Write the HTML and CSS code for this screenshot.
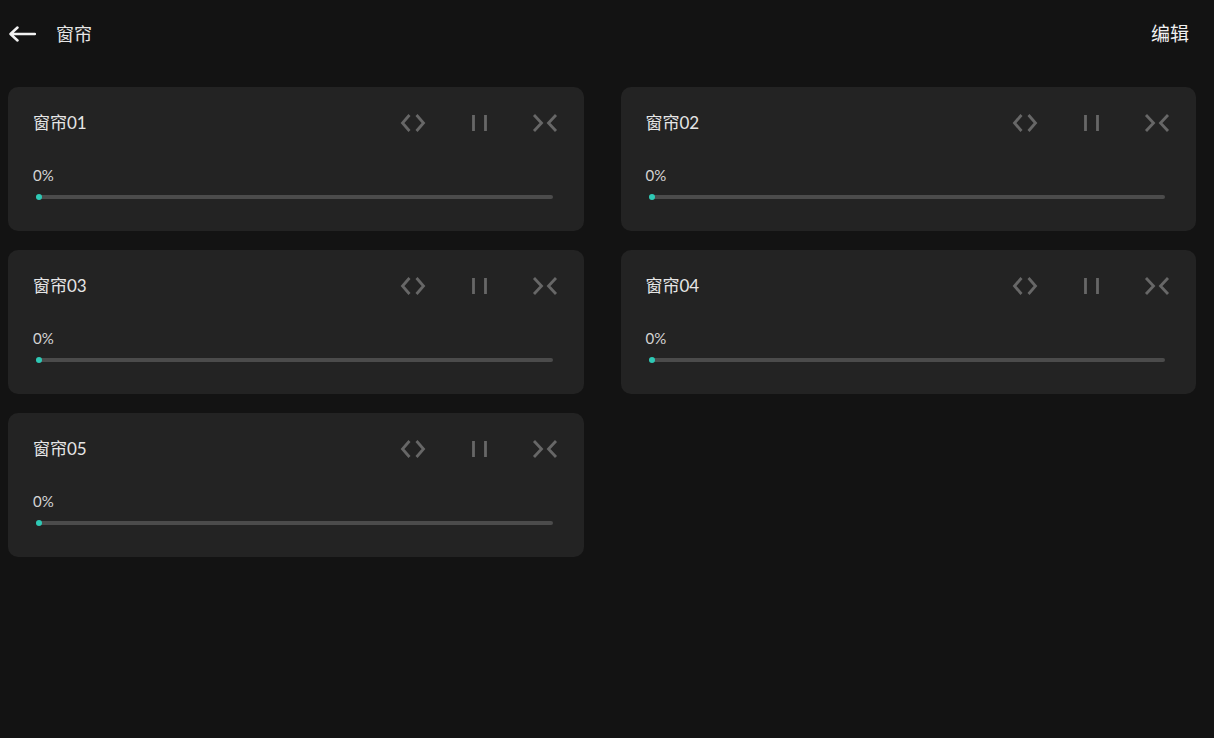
FILE: index.html
```html
<!DOCTYPE html>
<html lang="zh-CN">
<head>
    <meta charset="UTF-8">
    <title>窗帘</title>
    <link rel="stylesheet" href="styles.css">
</head>
<body>
    <div class="top-bar">
        <div class="top-left">
            <svg class="back" width="28" height="18" viewBox="0 0 28 18">
                <path d="M27 9H3M9.5 2.5L2.5 9L9.5 15.5" fill="none" stroke="#f2f2f2" stroke-width="2.5" stroke-linecap="round" stroke-linejoin="round"/>
            </svg>
            <span class="page-title">窗帘</span>
        </div>
        <span class="edit">编辑</span>
    </div>

    <div class="grid">
        <div class="card">
            <div class="card-head">
                <span class="name">窗帘01</span>
                <div class="ctrls">
                    <svg width="26" height="18" viewBox="0 0 26 18"><path d="M9.5 1L2.5 9L9.5 17M16.5 1L23.5 9L16.5 17" class="ic"/></svg>
                    <svg width="26" height="18" viewBox="0 0 26 18"><path d="M7.5 1V17M19.5 1V17" class="ic"/></svg>
                    <svg width="26" height="18" viewBox="0 0 26 18"><path d="M2 1L9.5 9L2 17M24 1L16.5 9L24 17" class="ic"/></svg>
                </div>
            </div>
            <div class="pct">0%</div>
            <div class="track"><i class="dot"></i></div>
        </div>
        <div class="card">
            <div class="card-head">
                <span class="name">窗帘02</span>
                <div class="ctrls">
                    <svg width="26" height="18" viewBox="0 0 26 18"><path d="M9.5 1L2.5 9L9.5 17M16.5 1L23.5 9L16.5 17" class="ic"/></svg>
                    <svg width="26" height="18" viewBox="0 0 26 18"><path d="M7.5 1V17M19.5 1V17" class="ic"/></svg>
                    <svg width="26" height="18" viewBox="0 0 26 18"><path d="M2 1L9.5 9L2 17M24 1L16.5 9L24 17" class="ic"/></svg>
                </div>
            </div>
            <div class="pct">0%</div>
            <div class="track"><i class="dot"></i></div>
        </div>
        <div class="card">
            <div class="card-head">
                <span class="name">窗帘03</span>
                <div class="ctrls">
                    <svg width="26" height="18" viewBox="0 0 26 18"><path d="M9.5 1L2.5 9L9.5 17M16.5 1L23.5 9L16.5 17" class="ic"/></svg>
                    <svg width="26" height="18" viewBox="0 0 26 18"><path d="M7.5 1V17M19.5 1V17" class="ic"/></svg>
                    <svg width="26" height="18" viewBox="0 0 26 18"><path d="M2 1L9.5 9L2 17M24 1L16.5 9L24 17" class="ic"/></svg>
                </div>
            </div>
            <div class="pct">0%</div>
            <div class="track"><i class="dot"></i></div>
        </div>
        <div class="card">
            <div class="card-head">
                <span class="name">窗帘04</span>
                <div class="ctrls">
                    <svg width="26" height="18" viewBox="0 0 26 18"><path d="M9.5 1L2.5 9L9.5 17M16.5 1L23.5 9L16.5 17" class="ic"/></svg>
                    <svg width="26" height="18" viewBox="0 0 26 18"><path d="M7.5 1V17M19.5 1V17" class="ic"/></svg>
                    <svg width="26" height="18" viewBox="0 0 26 18"><path d="M2 1L9.5 9L2 17M24 1L16.5 9L24 17" class="ic"/></svg>
                </div>
            </div>
            <div class="pct">0%</div>
            <div class="track"><i class="dot"></i></div>
        </div>
        <div class="card">
            <div class="card-head">
                <span class="name">窗帘05</span>
                <div class="ctrls">
                    <svg width="26" height="18" viewBox="0 0 26 18"><path d="M9.5 1L2.5 9L9.5 17M16.5 1L23.5 9L16.5 17" class="ic"/></svg>
                    <svg width="26" height="18" viewBox="0 0 26 18"><path d="M7.5 1V17M19.5 1V17" class="ic"/></svg>
                    <svg width="26" height="18" viewBox="0 0 26 18"><path d="M2 1L9.5 9L2 17M24 1L16.5 9L24 17" class="ic"/></svg>
                </div>
            </div>
            <div class="pct">0%</div>
            <div class="track"><i class="dot"></i></div>
        </div>
    </div>
</body>
</html>
```

FILE: styles.css
```css
*{
    margin: 0;
    padding: 0;
    box-sizing: border-box;
}
body{
    background-color: #131313;
    color: #e6e6e6;
    font-family: "Lato", "Noto Sans CJK SC", sans-serif;
    width: 1214px;
    height: 738px;
    overflow: hidden;
}
.top-bar{
    height: 67px;
    display: flex;
    align-items: center;
    justify-content: space-between;
    padding: 0 25px 0 8px;
}
.top-left{
    display: flex;
    align-items: center;
}
.back{
    display: block;
}
.page-title{
    margin-left: 20px;
    font-size: 18px;
    line-height: 24px;
}
.edit{
    font-size: 19px;
    line-height: 24px;
    color: #f0f0f0;
}
.grid{
    margin-top: 20px;
    padding: 0 18px 0 8px;
    display: grid;
    grid-template-columns: 1fr 1fr;
    column-gap: 37px;
    row-gap: 19px;
}
.card{
    height: 144px;
    background-color: #232323;
    border-radius: 10px;
    padding: 24px 26px 0 25px;
}
.card-head{
    display: flex;
    align-items: center;
    justify-content: space-between;
    height: 24px;
}
.name{
    font-size: 17px;
    line-height: 24px;
}
.ctrls{
    display: flex;
    align-items: center;
    gap: 40px;
}
.ctrls svg{
    display: block;
}
.ic{
    fill: none;
    stroke: #676767;
    stroke-width: 2.8;
}
.pct{
    margin-top: 30px;
    font-size: 15px;
    line-height: 20px;
    color: #d4d4d4;
}
.track{
    margin: 10px 5px 0 3px;
    height: 4px;
    border-radius: 2px;
    background-color: #4b4b4b;
    position: relative;
}
.dot{
    position: absolute;
    left: 0;
    top: -1px;
    width: 6px;
    height: 6px;
    border-radius: 50%;
    background-color: #2ec9b5;
}
```
